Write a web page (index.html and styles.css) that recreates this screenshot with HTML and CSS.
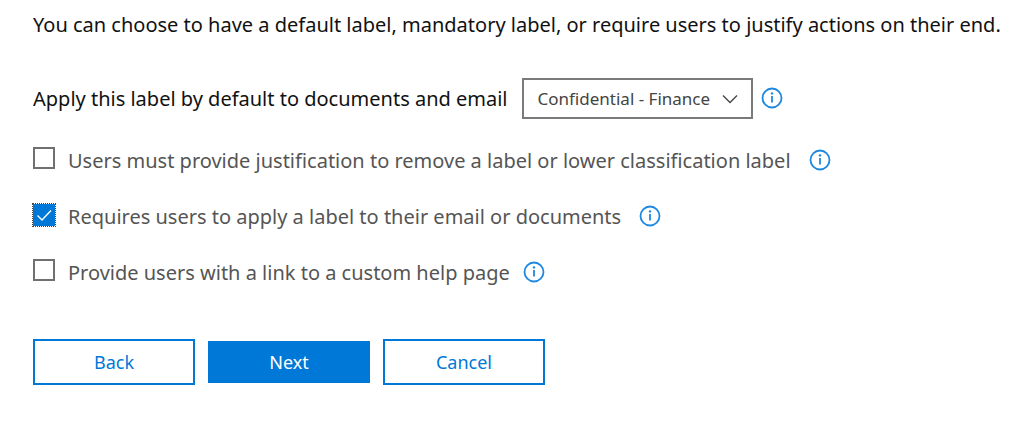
FILE: index.html
```html
<!DOCTYPE html>
<html lang="en">
<head>
    <meta charset="UTF-8">
    <meta name="viewport" content="width=device-width, initial-scale=1.0">
    <title>Label policy settings</title>
    <link rel="stylesheet" href="styles.css">
</head>
<body>

    <svg class="symbols" aria-hidden="true">
        <symbol id="info" viewBox="0 0 22 22">
            <circle cx="11" cy="11" r="9.5" fill="none" stroke="currentColor" stroke-width="1.8"/>
            <path d="M11 9v6.6" fill="none" stroke="currentColor" stroke-width="1.8"/>
            <circle cx="11" cy="6.4" r="1.2" fill="currentColor"/>
        </symbol>
    </svg>

    <form class="policy-form">
        <p class="intro">You can choose to have a default label, mandatory label, or require users to justify actions on their end.</p>

        <div class="default-label">
            <label for="default-label">Apply this label by default to documents and email</label>
            <div class="select-box">
                <select id="default-label">
                    <option>Confidential - Finance</option>
                </select>
                <svg class="chevron" viewBox="0 0 16 10" aria-hidden="true"><path d="M1 1.5l7 7 7-7"/></svg>
            </div>
            <svg class="info"><use href="#info"/></svg>
        </div>

        <div class="options">
            <div class="option">
                <input type="checkbox" id="justify">
                <label for="justify">Users must provide justification to remove a label or lower classification label</label>
                <svg class="info"><use href="#info"/></svg>
            </div>
            <div class="option">
                <div class="check-box">
                    <input type="checkbox" id="require" checked>
                    <svg class="tick" viewBox="0 0 24 24" aria-hidden="true"><path d="M5.5 12.5l4.5 4.5 9-9.5"/></svg>
                </div>
                <label for="require">Requires users to apply a label to their email or documents</label>
                <svg class="info"><use href="#info"/></svg>
            </div>
            <div class="option option-close">
                <input type="checkbox" id="help">
                <label for="help">Provide users with a link to a custom help page</label>
                <svg class="info"><use href="#info"/></svg>
            </div>
        </div>

        <div class="buttons">
            <button type="button" class="btn">Back</button>
            <button type="button" class="btn btn-primary">Next</button>
            <button type="button" class="btn">Cancel</button>
        </div>
    </form>

</body>
</html>
```

FILE: styles.css
```css
body {
    margin: 0;
    background-color: white;
    color: #111;
    font-family: "Segoe UI", "Noto Sans", "Open Sans", sans-serif;
    font-size: 20px;
    line-height: 28px;
}
.symbols {
    display: none;
}
.policy-form {
    padding: 11px 0 24px 33px;
}
.intro {
    margin: 0 0 39px;
    white-space: nowrap;
}
.default-label {
    display: flex;
    align-items: center;
    white-space: nowrap;
}
.select-box {
    display: grid;
    align-items: center;
    margin: 0 8px 0 14px;
}
.select-box select,
.chevron {
    grid-area: 1 / 1;
}
.select-box select {
    appearance: none;
    height: 41px;
    padding: 0 40px 0 14px;
    border: 2px solid #7a7a7a;
    border-radius: 0;
    background-color: white;
    color: #444;
    font-family: inherit;
    font-size: 17px;
}
.chevron {
    justify-self: end;
    width: 16px;
    height: 10px;
    margin-right: 15px;
    fill: none;
    stroke: #444;
    stroke-width: 1.3;
    pointer-events: none;
}
.info {
    flex: none;
    width: 22px;
    height: 22px;
    margin-bottom: 2px;
    color: #1e88e0;
}
.options {
    display: flex;
    flex-direction: column;
    gap: 28px;
    margin-top: 28px;
}
.option {
    display: flex;
    align-items: center;
    color: #555;
    white-space: nowrap;
}
.option label {
    margin: 0 18px 0 12px;
}
.option-close label {
    margin-right: 13px;
}
.option input {
    appearance: none;
    flex: none;
    width: 22px;
    height: 22px;
    margin: 0 1px 6px 0;
    border: 2px solid #707070;
}
.check-box {
    display: grid;
    margin: 0 0 4px -1px;
}
.check-box input,
.tick {
    grid-area: 1 / 1;
    width: 24px;
    height: 24px;
}
.check-box input {
    margin: 0;
    border: 1px dotted #444;
    background-color: #0078d7;
    background-clip: padding-box;
}
.tick {
    fill: none;
    stroke: white;
    stroke-width: 1.4;
    pointer-events: none;
}
.buttons {
    display: flex;
    gap: 13px;
    margin-top: 52px;
}
.btn {
    width: 162px;
    height: 46px;
    border: 2px solid #0078d7;
    background-color: white;
    color: #0078d7;
    font-family: inherit;
    font-size: 18px;
    cursor: pointer;
}
.btn-primary {
    border-width: 2px 0;
    border-color: white;
    background-color: #0078d7;
    background-clip: padding-box;
    color: white;
}
```
